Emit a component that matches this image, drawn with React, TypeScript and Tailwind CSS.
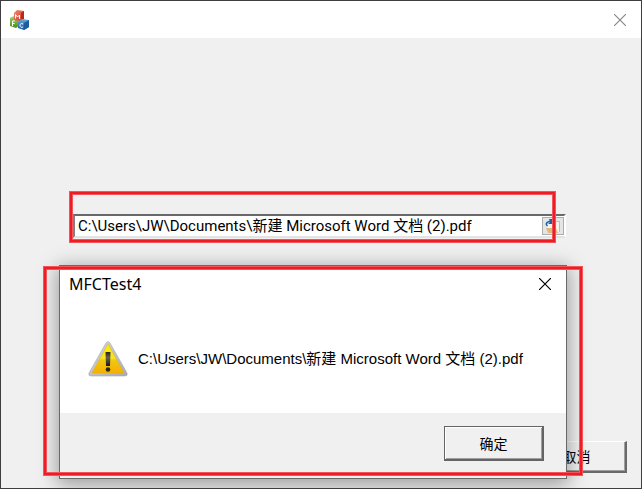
import { useState } from 'react';

const FILE_PATH = 'C:\\Users\\JW\\Documents\\新建 Microsoft Word 文档 (2).pdf';

function MfcIcon() {
  return (
    <svg viewBox="0 0 20 20" className="h-5 w-5" aria-hidden="true">
      <defs>
        <linearGradient id="red" x1="0" y1="0" x2="1" y2="1">
          <stop offset="0" stopColor="#f58a72" />
          <stop offset="1" stopColor="#cf3020" />
        </linearGradient>
        <linearGradient id="green" x1="0" y1="0" x2="0" y2="1">
          <stop offset="0" stopColor="#a6cf6c" />
          <stop offset="1" stopColor="#4d8c1d" />
        </linearGradient>
        <linearGradient id="blue" x1="0" y1="0" x2="0" y2="1">
          <stop offset="0" stopColor="#65aee0" />
          <stop offset="1" stopColor="#17569b" />
        </linearGradient>
      </defs>
      <path d="m1 8 4-2 6 2v7l-4 3-6-2Z" fill="url(#green)" />
      <path d="m5 3 3-3 7 1v8l-3 2-7-1Z" fill="url(#red)" />
      <path d="m12 3 3-2v8l-3 2Z" fill="#b8281c" />
      <path d="m9 12 4-3 7 1v7l-5 3-6-2Z" fill="url(#blue)" />
      <path d="m15 13 5-3v7l-5 3Z" fill="#1c5c9f" />
      <path d="M6.500 8.500v-4l2 2.500 2-2v4" fill="none" stroke="#fff" />
      <path d="M3.500 16v-5h2.500M3.500 13.500h2" fill="none" stroke="#fff" />
      <path d="M14 14c-2-1-3 0-3 1.500s1.500 2.500 3 1.500" fill="none" stroke="#fff" />
    </svg>
  );
}

function CloseIcon() {
  return (
    <svg viewBox="0 0 12 12" className="h-3 w-3" fill="none" stroke="currentColor" strokeWidth="1.200" aria-hidden="true">
      <path d="m0 0 12 12M12 0 0 12" />
    </svg>
  );
}

function BrowseIcon() {
  return (
    <svg viewBox="0 0 18 16" className="h-4 w-[18px]" aria-hidden="true">
      <path d="M3 3h12v11H3Z" fill="#f6f3ee" />
      <path d="M10 3.500h5.500V14" fill="none" stroke="#dfb87c" />
      <path d="M2 10h10l2 5H4Z" fill="#dfb87c" />
      <path d="M3.500 8C1 6 3 3.500 6 3.500" fill="none" stroke="#1762a8" strokeWidth="1.500" />
      <path d="M5 1h3v5H4l2-2Z" fill="#1762a8" />
    </svg>
  );
}

function WarningIcon() {
  return (
    <svg viewBox="0 0 40 36" className="h-9 w-10 shrink-0" aria-hidden="true">
      <defs>
        <linearGradient id="face" x1="0" y1="0" x2="0" y2="1">
          <stop offset="0" stopColor="#fff200" />
          <stop offset="0.500" stopColor="#f8e31c" />
          <stop offset="0.550" stopColor="#f0c814" />
          <stop offset="1" stopColor="#f7ae00" />
        </linearGradient>
        <linearGradient id="rim" x1="0" y1="0" x2="1" y2="1">
          <stop offset="0" stopColor="#d8dadd" />
          <stop offset="1" stopColor="#a8aaaf" />
        </linearGradient>
        <linearGradient id="mark" x1="0" y1="0" x2="0" y2="1">
          <stop offset="0" stopColor="#242424" />
          <stop offset="0.400" stopColor="#65604a" />
          <stop offset="1" stopColor="#171717" />
        </linearGradient>
      </defs>
      <path d="M18 2q2-3 4 0l17 30q1 3-2 3H3q-3 0-2-3Z" fill="url(#rim)" stroke="#a5a7aa" strokeWidth="0.600" />
      <path d="m20 3 16 29H4Z" fill="url(#face)" stroke="#d8b415" strokeWidth="0.500" />
      <path d="M17.500 11h5l-.5 14h-4Z" fill="url(#mark)" />
      <circle cx="20" cy="28.500" r="2.300" fill="#29251c" />
    </svg>
  );
}

function MessageBox({ onClose }: { onClose: () => void }) {
  return (
    <div
      role="alertdialog"
      aria-labelledby="message-title"
      aria-describedby="message-text"
      className="absolute top-[264px] right-[74px] left-[58px] border border-[#696969] bg-white shadow-[0_4px_18px_2px_rgba(0,0,0,0.35)]"
    >
      <div className="flex h-9 items-center justify-between pr-[15px] pl-[9px]">
        <h2 id="message-title" className="text-[16px] leading-5">
          MFCTest4
        </h2>
        <button type="button" aria-label="关闭" onClick={onClose}>
          <CloseIcon />
        </button>
      </div>
      <div className="flex items-center gap-[10px] px-7 pt-[39px] pb-9">
        <WarningIcon />
        <p
          id="message-text"
          className="font-['Liberation_Sans','Noto_Sans_CJK_SC',sans-serif] text-[15px] leading-5 whitespace-nowrap"
        >
          {FILE_PATH}
        </p>
      </div>
      <div className="flex justify-end bg-[#f0f0f0] pt-[13px] pr-[22px] pb-[17px]">
        <button
          type="button"
          onClick={onClose}
          className="h-[35px] w-[100px] border border-r-2 border-b-2 border-[#646464] bg-[#f0f0f0] text-[14px] shadow-[inset_1px_1px_0_#fff,inset_-1px_-1px_0_#a0a0a0]"
        >
          确定
        </button>
      </div>
    </div>
  );
}

export default function App() {
  const [path, setPath] = useState(FILE_PATH);
  const [messageOpen, setMessageOpen] = useState(true);

  return (
    <div className="relative flex min-h-screen flex-col overflow-hidden border border-[#3f3d40] bg-[#f0f0f0] font-['Noto_Sans','Noto_Sans_CJK_SC',sans-serif] text-black">
      <header className="flex h-[37px] items-center justify-between bg-white pr-[15px] pl-2">
        <MfcIcon />
        <button type="button" aria-label="关闭窗口" className="text-[#888]">
          <CloseIcon />
        </button>
      </header>

      <main className="flex flex-1 flex-col">
        <div className="mt-44 mr-[75px] ml-[72px] flex h-6 items-center border-2 border-t-[#696969] border-r-white border-b-[#e3e3e3] border-l-[#808080] bg-white">
          <input
            type="text"
            aria-label="文件路径"
            value={path}
            onChange={(e) => setPath(e.target.value)}
            className="min-w-0 flex-1 bg-transparent pl-[3px] font-['Roboto','Noto_Sans_CJK_SC',sans-serif] text-[15px] leading-5 outline-none"
          />
          <button
            type="button"
            aria-label="浏览"
            className="flex h-[18px] w-[22px] items-center justify-center border border-[#adadad] bg-[#e5e5e5]"
          >
            <BrowseIcon />
          </button>
        </div>

        <div className="mt-auto flex justify-end pr-[14px] pb-[15px]">
          <button
            type="button"
            className="h-8 w-[100px] border border-t-white border-r-2 border-r-[#696969] border-b-2 border-b-[#696969] border-l-white bg-[#f0f0f0] text-[14px] shadow-[inset_-1px_-1px_0_#a0a0a0]"
          >
            取消
          </button>
        </div>
      </main>

      {messageOpen && <MessageBox onClose={() => setMessageOpen(false)} />}

      {/* callout frames around the path field and the message */}
      <div className="pointer-events-none absolute top-[191px] right-[86px] left-[69px] h-[50px] border-2 border-[#ee1c25] shadow-[0_0_0_1px_#f2555c,inset_0_0_0_1px_#f2555c]" />
      <div className="pointer-events-none absolute top-[266px] right-[59px] left-[43px] h-[208px] border-2 border-[#ee1c25] shadow-[0_0_0_1px_#f2555c,inset_0_0_0_1px_#f2555c]" />
    </div>
  );
}
